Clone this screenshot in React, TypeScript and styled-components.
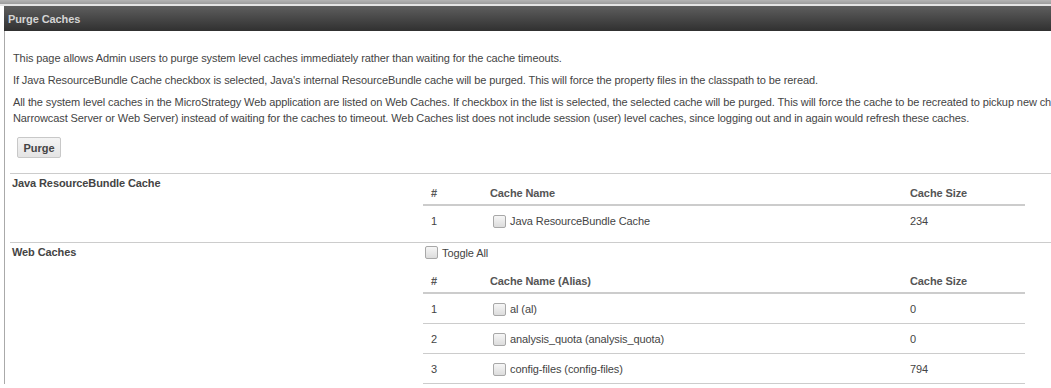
import React from "react";
import styled, { createGlobalStyle } from "styled-components";

const Global = createGlobalStyle`
  html, body { margin: 0; padding: 0; background: #fff; overflow: hidden; }
  body { font-family: Tahoma, "Liberation Sans", Arial, sans-serif; font-size: 11px; color: #444; letter-spacing: -0.1px; }
`;

const Page = styled.div`
  width: 1400px;
`;

const TopBand = styled.div`
  height: 4px;
  background: linear-gradient(#b4b4b4, #9c9c9c);
  border-bottom: 2px solid #e4e4e4;
`;

const Panel = styled.div`
  margin-left: 4px;
`;

const Header = styled.div`
  height: 25px;
  display: flex;
  align-items: center;
  padding-left: 4px;
  background: linear-gradient(#5e5e5e, #303030);
  color: #d4d4d4;
  font-weight: bold;
  font-size: 11px;
`;

const Body = styled.div`
  border-left: 1px solid #aaa;
  padding: 19px 0 0 5px;
`;

const Para = styled.p`
  margin: 0 0 6px 3px;
  line-height: 16px;
  white-space: nowrap;
  color: #444;
`;

const Button = styled.button`
  margin: 5px 0 15px 7px;
  height: 21px;
  width: 44px;
  padding: 0;
  border: 1px solid #c8c8c8;
  border-radius: 2px;
  background: linear-gradient(#f4f4f4, #e4e4e4);
  font-family: inherit;
  font-size: 11px;
  font-weight: bold;
  color: #444;
  letter-spacing: 0;
`;

const Section = styled.div<{ $pb?: number }>`
  display: flex;
  border-top: 1px solid #ccc;
  padding-bottom: ${(p) => p.$pb ?? 0}px;
`;

const SectionLabel = styled.div`
  width: 411px;
  padding: 2px 0 0 2px;
  line-height: 14px;
  font-weight: bold;
  color: #444;
`;

const SectionContent = styled.div`
  display: flex;
  flex-direction: column;
`;

const ToggleRow = styled.label`
  height: 19px;
  display: flex;
  align-items: center;
  gap: 4px;
  padding-left: 2px;
  color: #444;
`;

const Box = styled.span`
  width: 11px;
  height: 11px;
  flex: none;
  border: 1px solid #a8a8a8;
  border-radius: 2px;
  background: linear-gradient(#f6f6f6, #dcdcdc);
`;

const Table = styled.div`
  width: 602px;
  display: grid;
  grid-template-columns: 59px 420px 123px;
`;

const HeadCell = styled.div`
  padding: 12px 8px 4px 8px;
  line-height: 14px;
  font-weight: bold;
  color: #555;
  border-bottom: 2px solid #ccc;
`;

const Cell = styled.div<{ $border?: boolean }>`
  padding: 8px 8px 7px 8px;
  line-height: 14px;
  color: #444;
  display: flex;
  align-items: center;
  gap: 4px;
  border-bottom: ${(p) => (p.$border ? "1px solid #ccc" : "none")};
`;

const NameCell = styled(Cell)`
  padding-left: 11px;
`;

type Row = { n: number; name: string; size: string };

const CacheTable = ({ title, rows, border }: { title: string; rows: Row[]; border: boolean }) => (
  <Table>
    <HeadCell>#</HeadCell>
    <HeadCell>{title}</HeadCell>
    <HeadCell>Cache Size</HeadCell>
    {rows.map((r) => (
      <React.Fragment key={r.n}>
        <Cell $border={border}>{r.n}</Cell>
        <NameCell $border={border}>
          <Box />
          {r.name}
        </NameCell>
        <Cell $border={border}>{r.size}</Cell>
      </React.Fragment>
    ))}
  </Table>
);

export default function App() {
  return (
    <Page>
      <Global />
      <TopBand />
      <Panel>
        <Header>Purge Caches</Header>
        <Body>
          <Para>
            This page allows Admin users to purge system level caches immediately rather than waiting for the cache timeouts.
          </Para>
          <Para>
            If Java ResourceBundle Cache checkbox is selected, Java's internal ResourceBundle cache will be purged. This will force the property files in the classpath to be reread.
          </Para>
          <Para>
            All the system level caches in the MicroStrategy Web application are listed on Web Caches. If checkbox in the list is selected, the selected cache will be purged. This will force the cache to be recreated to pickup new changes (e.g. from Intelligence Server,
            <br />
            Narrowcast Server or Web Server) instead of waiting for the caches to timeout. Web Caches list does not include session (user) level caches, since logging out and in again would refresh these caches.
          </Para>
          <Button>Purge</Button>
          <Section $pb={7}>
            <SectionLabel>Java ResourceBundle Cache</SectionLabel>
            <SectionContent>
              <CacheTable
                title="Cache Name"
                border={false}
                rows={[{ n: 1, name: "Java ResourceBundle Cache", size: "234" }]}
              />
            </SectionContent>
          </Section>
          <Section>
            <SectionLabel>Web Caches</SectionLabel>
            <SectionContent>
              <ToggleRow>
                <Box />
                Toggle All
              </ToggleRow>
              <CacheTable
                title="Cache Name (Alias)"
                border={true}
                rows={[
                  { n: 1, name: "al (al)", size: "0" },
                  { n: 2, name: "analysis_quota (analysis_quota)", size: "0" },
                  { n: 3, name: "config-files (config-files)", size: "794" },
                ]}
              />
            </SectionContent>
          </Section>
        </Body>
      </Panel>
    </Page>
  );
}
